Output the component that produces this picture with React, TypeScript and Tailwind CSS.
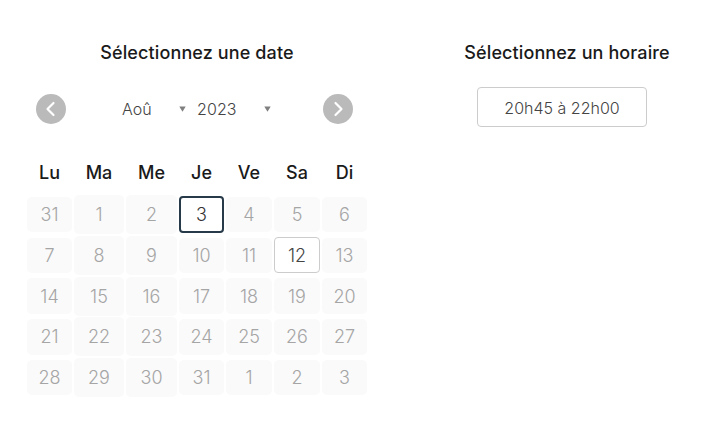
import clsx from 'clsx'

const weekdays = ['Lu', 'Ma', 'Me', 'Je', 'Ve', 'Sa', 'Di']

const weeks = [
  [31, 1, 2, 3, 4, 5, 6],
  [7, 8, 9, 10, 11, 12, 13],
  [14, 15, 16, 17, 18, 19, 20],
  [21, 22, 23, 24, 25, 26, 27],
  [28, 29, 30, 31, 1, 2, 3]
]

const columns = 'grid grid-cols-[45px_50px_51px_45px_46px_46px_45px] gap-x-[2px]'

function NavButton({ label, path }: { label: string; path: string }) {
  return (
    <button aria-label={label} className="flex h-[30px] w-[30px] items-center justify-center rounded-full bg-[#bababa]">
      <svg width="30" height="30" viewBox="0 0 30 30" fill="none" stroke="white" strokeWidth="2.2" strokeLinecap="round" strokeLinejoin="round">
        <path d={path} />
      </svg>
    </button>
  )
}

function Caret() {
  return (
    <svg width="7" height="6" viewBox="0 0 7 6" fill="#808080">
      <path d="M0.3 0.5h6.4L3.5 5.8z" />
    </svg>
  )
}

function Day({ day, week, column }: { day: number; week: number; column: number }) {
  const selected = week === 0 && column === 3
  const available = week === 1 && column === 5
  const tall = column === 1 || column === 2

  return (
    <button
      className={clsx(
        'flex items-center justify-center self-center text-[18px] font-light',
        !selected && !available && (tall ? 'h-[39px]' : 'h-[35.5px]'),
        selected && 'h-[37px] rounded-[4px] border-2 border-[#273a49] text-[#333333]',
        available && 'h-[36px] rounded-[4px] border border-[#cccccc] text-[#444444]',
        !selected && !available && 'rounded-[5px] bg-[#fafafa] text-[#a5a5a5]'
      )}
    >
      {day}
    </button>
  )
}

export default function App() {
  return (
    <main className="flex h-[437px] w-[703px] overflow-hidden bg-white pl-[27px] font-['Inter',sans-serif] text-[#1a1a1a]">
      <section className="w-[340px] pt-[39px]">
        <h2 className="text-center text-[18px] leading-[28px] font-medium tracking-[0.12px]">Sélectionnez une date</h2>

        {/* Month navigation */}
        <div className="mt-[27px] flex h-[30px] items-center pr-[14px] pl-[9px]">
          <NavButton label="Mois précédent" path="M17.5 9l-6 6 6 6" />
          <div className="ml-[56px] flex w-[149px] items-center text-[16px] font-light text-[#444444]">
            <span className="w-[57px] shrink-0">Aoû</span>
            <div className="shrink-0">
              <Caret />
            </div>
            <span className="ml-[11px] w-[67px] shrink-0 tracking-[0.1px]">2023</span>
            <div className="shrink-0">
              <Caret />
            </div>
          </div>
          <div className="ml-auto">
            <NavButton label="Mois suivant" path="M12.5 9l6 6-6 6" />
          </div>
        </div>

        {/* Calendar */}
        <div className={clsx(columns, 'mt-[35px] h-[36px] text-center text-[18px] leading-[28px] font-medium')}>
          {weekdays.map((name) => (
            <span key={name}>{name}</span>
          ))}
        </div>
        <div className={clsx(columns, 'auto-rows-[39px] gap-y-[1.75px]')}>
          {weeks.map((days, week) =>
            days.map((day, column) => (
              <Day key={`${week}-${column}`} day={day} week={week} column={column} />
            ))
          )}
        </div>
      </section>

      <section className="ml-[97px] flex w-[206px] flex-col items-center pt-[39px]">
        <h2 className="text-[18px] leading-[28px] font-medium tracking-[0.1px] whitespace-nowrap">Sélectionnez un horaire</h2>
        <button className="mt-[20px] mr-[10px] h-[40px] w-[170px] rounded-[4px] border border-[#cccccc] pt-[2px] text-[16px] font-light text-[#444444]">
          20h45 à 22h00
        </button>
      </section>
    </main>
  )
}
